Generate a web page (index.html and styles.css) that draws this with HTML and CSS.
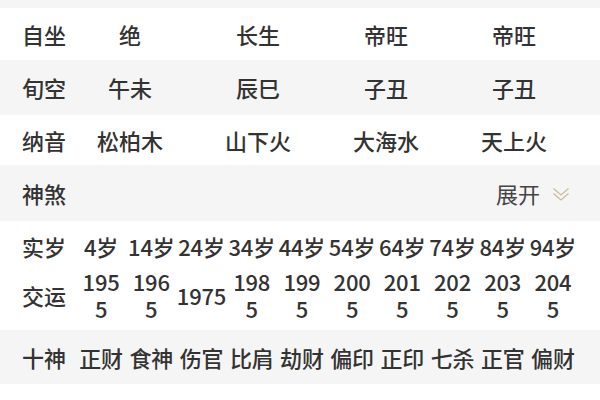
FILE: index.html
```html
<!DOCTYPE html>
<html lang="zh">
<head>
<meta charset="utf-8">
<link rel="stylesheet" href="styles.css">
</head>
<body>
<div class="strip"></div>
<div class="row4 h52">
  <div class="label">自坐</div><div class="cell">绝</div><div class="cell">长生</div><div class="cell">帝旺</div><div class="cell">帝旺</div>
</div>
<div class="row4 gray h55">
  <div class="label">旬空</div><div class="cell">午未</div><div class="cell">辰巳</div><div class="cell">子丑</div><div class="cell">子丑</div>
</div>
<div class="row4 h50">
  <div class="label">纳音</div><div class="cell">松柏木</div><div class="cell">山下火</div><div class="cell">大海水</div><div class="cell">天上火</div>
</div>
<div class="shensha gray">
  <div class="label">神煞</div>
  <div class="expand">展开
    <svg class="chev" width="18" height="16" viewBox="0 0 18 16" fill="none" stroke="#cbbd98" stroke-width="1.3">
      <path d="M1.5 2.5 L9 9 L16.5 2.5"/>
      <path d="M1.5 7.5 L9 14 L16.5 7.5"/>
    </svg>
  </div>
</div>
<div class="dayun">
  <div class="row10">
    <div class="label">实岁</div>
    <div class="cell">4岁</div><div class="cell">14岁</div><div class="cell">24岁</div><div class="cell">34岁</div><div class="cell">44岁</div><div class="cell">54岁</div><div class="cell">64岁</div><div class="cell">74岁</div><div class="cell">84岁</div><div class="cell">94岁</div>
  </div>
  <div class="row10 tall">
    <div class="label">交运</div>
    <div class="cell">195<br>5</div><div class="cell">196<br>5</div><div class="cell">1975</div><div class="cell">198<br>5</div><div class="cell">199<br>5</div><div class="cell">200<br>5</div><div class="cell">201<br>5</div><div class="cell">202<br>5</div><div class="cell">203<br>5</div><div class="cell">204<br>5</div>
  </div>
</div>
<div class="row10 gray h54">
  <div class="label">十神</div>
  <div class="cell">正财</div><div class="cell">食神</div><div class="cell">伤官</div><div class="cell">比肩</div><div class="cell">劫财</div><div class="cell">偏印</div><div class="cell">正印</div><div class="cell">七杀</div><div class="cell">正官</div><div class="cell">偏财</div>
</div>
<div class="row10 next">
  <div class="label">干支</div>
  <div class="cell">丙午</div><div class="cell">丁未</div><div class="cell">戊申</div><div class="cell">己酉</div><div class="cell">庚戌</div><div class="cell">辛亥</div><div class="cell">壬子</div><div class="cell">癸丑</div><div class="cell">甲寅</div><div class="cell">乙卯</div>
</div>
</body>
</html>
```

FILE: styles.css
```css
* { box-sizing: border-box; }
html, body { margin: 0; padding: 0; background: #fff; }
body {
  width: 600px;
  height: 400px;
  overflow: hidden;
  font-family: "Noto Sans CJK SC", "Noto Sans", sans-serif;
  font-size: 22px;
  font-weight: 500;
  color: #333;
}
.strip { height: 8px; background: #f5f5f5; }
.gray { background: #f5f5f5; }
.row4 {
  display: grid;
  grid-template-columns: 44px repeat(4, 1fr);
  align-items: center;
  padding: 0 22px;
  line-height: 27px;
}
.h52 { height: 52px; }
.h55 { height: 55px; }
.h50 { height: 50px; }
.h54 { height: 54px; }
.label { text-align: left; white-space: nowrap; }
.cell { text-align: center; white-space: nowrap; }
.shensha {
  height: 56px;
  display: flex;
  align-items: center;
  justify-content: space-between;
  padding: 0 30px 0 22px;
  line-height: 27px;
}
.expand {
  display: flex;
  align-items: center;
  gap: 12px;
  color: #444;
  font-weight: 400;
}
.chev { display: block; margin-top: 1px; }
.dayun {
  height: 109px;
  padding: 12px 0 8px;
  display: flex;
  flex-direction: column;
  gap: 8px;
}
.row10 {
  display: grid;
  grid-template-columns: 54px repeat(10, 1fr);
  align-items: center;
  padding: 0 22px;
  line-height: 27px;
}
.row10 .cell { letter-spacing: -0.2px; }
.tall { height: 54px; }
.next { padding-top: 14px; color: #ccc; }
```
